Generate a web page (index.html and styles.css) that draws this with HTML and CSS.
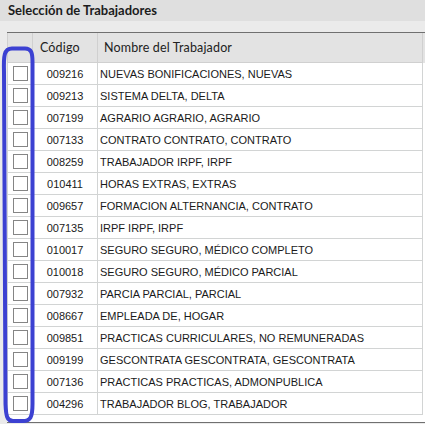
FILE: index.html
```html
<!DOCTYPE html>
<html lang="es">
<head>
<meta charset="utf-8">
<title>Selección de Trabajadores</title>
<link rel="stylesheet" href="styles.css">
</head>
<body>
<div class="page">
  <div class="titlebar">Selección de Trabajadores</div>
  <div class="spacer"></div>
  <div class="grid">
    <div class="row head">
      <div class="cell c1"></div>
      <div class="cell c2">Código</div>
      <div class="cell c3">Nombre del Trabajador</div>
    </div>
    <div class="row"><div class="cell c1"><span class="box"></span></div><div class="cell c2">009216</div><div class="cell c3">NUEVAS BONIFICACIONES, NUEVAS</div></div>
    <div class="row"><div class="cell c1"><span class="box"></span></div><div class="cell c2">009213</div><div class="cell c3">SISTEMA DELTA, DELTA</div></div>
    <div class="row"><div class="cell c1"><span class="box"></span></div><div class="cell c2">007199</div><div class="cell c3">AGRARIO AGRARIO, AGRARIO</div></div>
    <div class="row"><div class="cell c1"><span class="box"></span></div><div class="cell c2">007133</div><div class="cell c3">CONTRATO CONTRATO, CONTRATO</div></div>
    <div class="row"><div class="cell c1"><span class="box"></span></div><div class="cell c2">008259</div><div class="cell c3">TRABAJADOR IRPF, IRPF</div></div>
    <div class="row"><div class="cell c1"><span class="box"></span></div><div class="cell c2">010411</div><div class="cell c3">HORAS EXTRAS, EXTRAS</div></div>
    <div class="row"><div class="cell c1"><span class="box"></span></div><div class="cell c2">009657</div><div class="cell c3">FORMACION ALTERNANCIA, CONTRATO</div></div>
    <div class="row"><div class="cell c1"><span class="box"></span></div><div class="cell c2">007135</div><div class="cell c3">IRPF IRPF, IRPF</div></div>
    <div class="row"><div class="cell c1"><span class="box"></span></div><div class="cell c2">010017</div><div class="cell c3">SEGURO SEGURO, MÉDICO COMPLETO</div></div>
    <div class="row"><div class="cell c1"><span class="box"></span></div><div class="cell c2">010018</div><div class="cell c3">SEGURO SEGURO, MÉDICO PARCIAL</div></div>
    <div class="row"><div class="cell c1"><span class="box"></span></div><div class="cell c2">007932</div><div class="cell c3">PARCIA PARCIAL, PARCIAL</div></div>
    <div class="row"><div class="cell c1"><span class="box"></span></div><div class="cell c2">008667</div><div class="cell c3">EMPLEADA DE, HOGAR</div></div>
    <div class="row"><div class="cell c1"><span class="box"></span></div><div class="cell c2">009851</div><div class="cell c3">PRACTICAS CURRICULARES, NO REMUNERADAS</div></div>
    <div class="row"><div class="cell c1"><span class="box"></span></div><div class="cell c2">009199</div><div class="cell c3">GESCONTRATA GESCONTRATA, GESCONTRATA</div></div>
    <div class="row"><div class="cell c1"><span class="box"></span></div><div class="cell c2">007136</div><div class="cell c3">PRACTICAS PRACTICAS, ADMONPUBLICA</div></div>
    <div class="row"><div class="cell c1"><span class="box"></span></div><div class="cell c2">004296</div><div class="cell c3">TRABAJADOR BLOG, TRABAJADOR</div></div>
  </div>
  <svg class="annot" width="40" height="424" viewBox="0 0 40 424" aria-hidden="true">
    <path d="M4 72 C3.5 56 4 48.5 12 48.5 L25 48.5 C31.5 48.5 32.5 53 32.5 62 L32.5 404 C32.5 418 30 421 23 421 L13 421 C7 421 6 416 5.5 404 Z" fill="none" stroke="#3c41d2" stroke-width="4" stroke-linejoin="round"/>
  </svg>
</div>
</body>
</html>
```

FILE: styles.css
```css
html, body {
  margin: 0;
  padding: 0;
}
body {
  background: #ebebeb;
}
.page {
  position: relative;
  width: 425px;
  height: 424px;
  overflow: hidden;
  background: #ebebeb;
}
.titlebar {
  height: 21px;
  box-sizing: border-box;
  padding-left: 8px;
  background: #dfdfdf;
  font-family: Lato, "Open Sans", sans-serif;
  font-weight: bold;
  font-size: 13px;
  line-height: 21px;
  color: #1c1c1c;
}
.spacer {
  height: 11px;
}
.grid {
  margin-left: 7px;
  height: 391px;
  box-sizing: border-box;
  border-top: 1px solid #707070;
  border-bottom: 1px solid #707070;
  background: #ffffff;
}
.row {
  display: grid;
  grid-template-columns: 26px 65px 325px;
  height: 22px;
}
.cell {
  box-sizing: border-box;
  border-right: 1px solid #d2d4d4;
  border-bottom: 1px solid #d2d4d4;
  font-family: "Liberation Sans", Arial, sans-serif;
  font-size: 11px;
  color: #1a1a1a;
  display: flex;
  align-items: center;
  white-space: nowrap;
  overflow: hidden;
}
.c1 {
  border-left: 1px solid #d2d4d4;
  justify-content: center;
}
.c2 {
  justify-content: center;
}
.c3 {
  padding-left: 2px;
}
.head {
  height: 30px;
  background: #e3e3e3;
}
.head .cell {
  font-family: Lato, "Open Sans", sans-serif;
  font-size: 12.5px;
  letter-spacing: 0.15px;
  color: #222;
  border-color: #d0d0d0;
}
.head .c2 {
  justify-content: flex-start;
  padding-left: 7px;
}
.head .c3 {
  padding-left: 6px;
}
.box {
  width: 15px;
  height: 15px;
  box-sizing: border-box;
  border: 1px solid #858585;
  background: #fff;
  margin-left: 1px;
}
.annot {
  position: absolute;
  left: 0;
  top: 0;
}
```
